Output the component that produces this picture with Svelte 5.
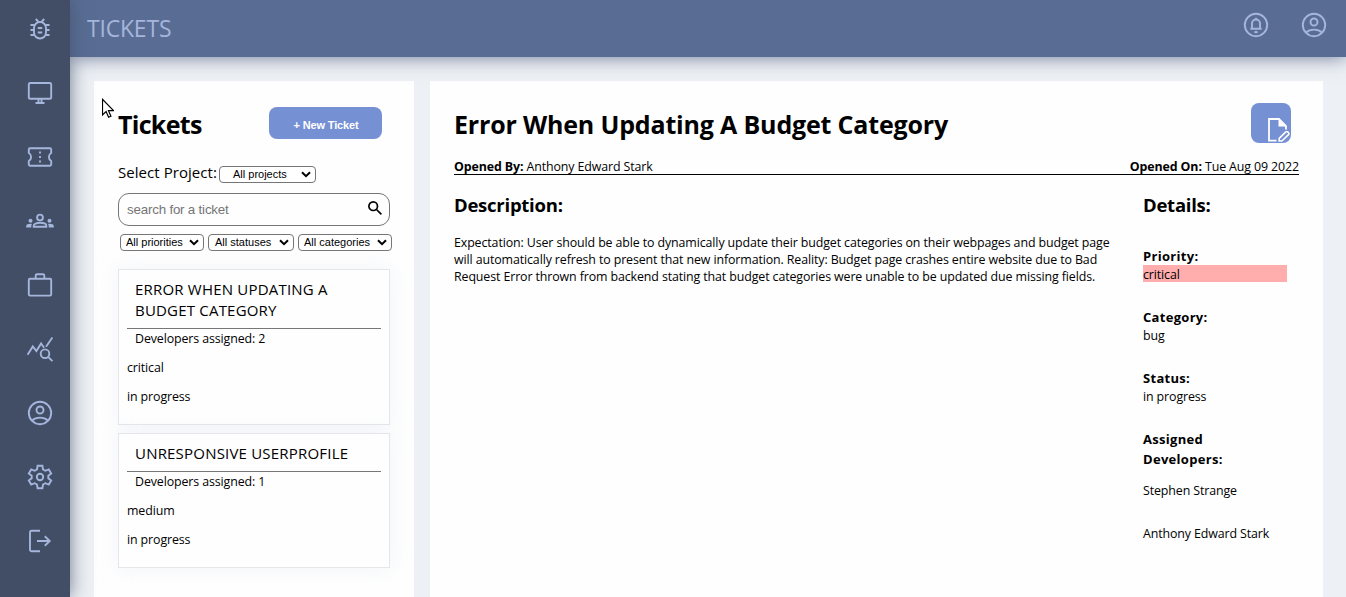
<script>
  const nav = ['bug', 'desktop', 'ticket', 'groups', 'work', 'stats', 'account', 'settings', 'logout'];
  const tickets = [
    { title: 'Error When Updating A Budget Category', devs: 2, priority: 'critical', status: 'in progress' },
    { title: 'Unresponsive Userprofile', devs: 1, priority: 'medium', status: 'in progress' }
  ];
  const filters = [
    { label: 'All priorities', cls: 'priorities' },
    { label: 'All statuses', cls: 'statuses' },
    { label: 'All categories', cls: 'categories' }
  ];
  const developers = ['Stephen Strange', 'Anthony Edward Stark'];
</script>

{#snippet icon(name)}
  <svg class="icon" viewBox="0 0 28 28" aria-hidden="true">
    {#if name === 'bug'}
      <rect x="8" y="7" width="12" height="16.5" rx="6" />
      <path d="M9.8 4l2.7 3M18.2 4l-2.7 3M4.5 10h4M4.5 15h3.5M4.5 20h4M23.5 10h-4M23.5 15h-3.5M23.5 20h-4M11.8 13h4.4M11.8 17.5h4.4" />
    {:else if name === 'desktop'}
      <rect x="2.8" y="4" width="22.4" height="15.8" rx="1.4" />
      <path d="M12.5 20v3.2M15.5 20v3.2M9.5 24h9" />
    {:else if name === 'ticket'}
      <path d="M4 5.2h20q1.2 0 1.2 1.2v3.6a4.6 4.6 0 0 0 0 8v3.6q0 1.2-1.2 1.2H4q-1.2 0-1.2-1.2V18a4.6 4.6 0 0 0 0-8V6.4q0-1.2 1.2-1.2z" />
      <path d="M14 8.5v2M14 13v2M14 17.5v2" />
    {:else if name === 'groups'}
      <g transform="translate(0 .8)">
        <circle cx="14" cy="9.7" r="2.9" />
        <path d="M7.7 19v-1.2c0-1.7 3-2.8 6.3-2.8s6.3 1.1 6.3 2.8V19z" />
        <g class="solid">
          <circle cx="4.5" cy="13" r="2" /><circle cx="23.5" cy="13" r="2" />
          <path d="M.2 19.8v-1.6c0-1.6 2.4-2.5 5.8-2.1q-.7.8-.7 2v1.7zM27.8 19.8v-1.6c0-1.6-2.4-2.5-5.8-2.1q.7.8.7 2v1.7z" />
        </g>
      </g>
    {:else if name === 'work'}
      <rect x="2.8" y="7.8" width="22.4" height="16.8" rx="1.2" />
      <path d="M9.7 7.8V4.4q0-1.2 1.2-1.2h6.2q1.2 0 1.2 1.2v3.4" />
    {:else if name === 'stats'}
      <path d="M1.6 19.8l5.2-8.3 3.6 4.5 4.7-7.5 3 4.2M20 11.8l6.4-9.3M22.6 22.3l3.9 3.9" />
      <circle cx="19" cy="18.7" r="4.3" />
    {:else if name === 'account'}
      <circle cx="14" cy="14" r="11.2" />
      <circle cx="14" cy="11" r="3.5" />
      <path d="M6 21.5c4-3.8 12-3.8 16 0" />
    {:else if name === 'settings'}
      <path d="M11.6 2.8h4.8l.6 3.7 2.3 1.3 3.5-1.4 2.4 4.1-2.9 2.3v2.4l2.9 2.3-2.4 4.1-3.5-1.4-2.3 1.3-.6 3.7h-4.8l-.6-3.7-2.3-1.3-3.5 1.4-2.4-4.1 2.9-2.3v-2.4l-2.9-2.3 2.4-4.1 3.5 1.4 2.3-1.3z" />
      <circle cx="14" cy="14" r="3.2" />
    {:else if name === 'logout'}
      <path d="M14 3.8H5.5q-1.5 0-1.5 1.5v17.4q0 1.5 1.5 1.5H14M11 14h12.5M18.8 9.3l4.9 4.7-4.9 4.7" />
    {:else if name === 'bell'}
      <circle cx="14" cy="14" r="11.2" />
      <path d="M8.3 17.7h11.4M10 17.5v-5a4 4 0 0 1 8 0v5M14 8.3V6.8M12.5 20.5q1.5 1.3 3 0" />
    {/if}
  </svg>
{/snippet}

{#snippet dropdown(label, cls)}
  <button class="select {cls}">
    <span>{label}</span>
    <svg viewBox="0 0 10 7" aria-hidden="true"><path d="M1 1.200l4 4 4-4" /></svg>
  </button>
{/snippet}

<div class="app">
  <nav class="sidebar">
    {#each nav as name}
      {@render icon(name)}
    {/each}
  </nav>
  <div class="page">
    <header class="topbar">
      <h1>TICKETS</h1>
      <div class="user">
        {@render icon('bell')}
        {@render icon('account')}
      </div>
    </header>
    <main>
      <section class="panel list">
        <div class="list-head">
          <h2>Tickets</h2>
          <button class="new">+ New Ticket</button>
        </div>
        <div class="project">
          <span class="label">Select Project:</span>
          {@render dropdown('All projects', 'projects')}
        </div>
        <div class="search">
          <input placeholder="search for a ticket" />
          <svg viewBox="0 0 16 16" aria-hidden="true"><circle cx="6.2" cy="6.2" r="4.3" /><path d="M9.5 9.5l4.900 4.900" /></svg>
        </div>
        <div class="filters">
          {#each filters as f}
            {@render dropdown(f.label, f.cls)}
          {/each}
        </div>
        {#each tickets as t}
          <article class="card">
            <h3>{t.title}</h3>
            <p class="devs">Developers assigned: {t.devs}</p>
            <p>{t.priority}</p>
            <p>{t.status}</p>
          </article>
        {/each}
      </section>

      <section class="panel detail">
        <div class="detail-head">
          <h2>Error When Updating A Budget Category</h2>
          <button class="edit" aria-label="Edit ticket">
            <svg viewBox="0 0 24 26" aria-hidden="true">
              <path d="M10.500 23.700H3V2h10l7 7v3.500" />
              <path class="solid" d="M12.500 1.500v8H20.500z" />
              <path class="pencil" d="M13.200 24v-2.600l6.600-6.500q.9-.8 1.800 0l.9.900q.8.900 0 1.800L15.900 24z" />
            </svg>
          </button>
        </div>
        <div class="opened">
          <span><b>Opened By:</b> Anthony Edward Stark</span>
          <span><b>Opened On:</b> Tue Aug 09 2022</span>
        </div>
        <div class="columns">
          <div class="description">
            <h3>Description:</h3>
            <p>
              Expectation: User should be able to dynamically update their budget categories on their webpages and budget page<br />
              will automatically refresh to present that new information. Reality: Budget page crashes entire website due to Bad<br />
              Request Error thrown from backend stating that budget categories were unable to be updated due missing fields.
            </p>
          </div>
          <aside>
            <h3>Details:</h3>
            <dl>
              <div><dt>Priority:</dt><dd class="critical">critical</dd></div>
              <div><dt>Category:</dt><dd>bug</dd></div>
              <div><dt>Status:</dt><dd>in progress</dd></div>
              <div><dt>Assigned<br />Developers:</dt>
                {#each developers as d}<dd class="dev">{d}</dd>{/each}
              </div>
            </dl>
          </aside>
        </div>
      </section>
    </main>
  </div>
  <svg class="cursor" viewBox="0 0 12 20" aria-hidden="true">
    <path d="M.5 1.300v15.700l3.600-3.500 2.500 5.700 2.300-1-2.400-5.500h5z" />
  </svg>
</div>

<style>
  :global(body) { margin: 0; overflow: hidden; }
  * { box-sizing: border-box; }
  h1, h2, h3, p, dl, dd { margin: 0; }
  button { border: 0; padding: 0; letter-spacing: 0; }
  .app {
    display: flex;
    height: 597px;
    position: relative;
    overflow: hidden;
    background: #edf1f5;
    color: #000;
    font: 12.400px/17px "Open Sans", sans-serif;
    letter-spacing: -.11px;
  }
  .sidebar {
    width: 70px;
    flex: none;
    display: flex;
    flex-direction: column;
    gap: 36px;
    padding: 15px 0 0 26px;
    background: #414e66;
    box-shadow: 0 0 18px rgba(65, 78, 102, .75);
    z-index: 2;
  }
  .icon {
    width: 28px;
    height: 28px;
    flex: none;
    fill: none;
    stroke: #a5b5db;
    stroke-width: 1.900;
  }
  .icon .solid { fill: #a5b5db; stroke: none; }
  .page { flex: 1; display: flex; flex-direction: column; }
  .topbar {
    height: 57px;
    flex: none;
    display: flex;
    justify-content: space-between;
    padding: 0 19px 0 17px;
    background: #596d94;
    box-shadow: 0 0 18px rgba(65, 78, 120, .75);
    z-index: 1;
  }
  .topbar h1 {
    font-size: 23px;
    font-weight: 400;
    line-height: 56px;
    letter-spacing: -.2px;
    color: #a5b5db;
  }
  .user { display: flex; gap: 30px; padding-top: 11px; margin-right: -1px; }
  main { flex: 1; display: flex; gap: 16px; padding: 24px 23px 0 24px; }
  .panel { background: #fefefe; }
  .list { width: 320px; flex: none; padding: 26px 24px 0; }
  .list-head { display: flex; justify-content: space-between; padding-right: 8px; height: 32px; }
  h2 { font-size: 25px; line-height: 35px; font-weight: 700; letter-spacing: -.7px; }
  .new {
    width: 113px;
    height: 32px;
    padding: 3px 0 0 1px;
    border-radius: 8px;
    background: #7690d4;
    color: #fff;
    font: bold 11px "Liberation Sans", sans-serif;
    letter-spacing: -.15px;
  }
  .project {
    display: flex;
    align-items: center;
    height: 18px;
    margin-top: 26px;
    font-size: 15px;
    letter-spacing: .05px;
  }
  .label { width: 101px; padding-bottom: 3px; white-space: nowrap; }
  .select {
    display: flex;
    align-items: center;
    justify-content: space-between;
    height: 17px;
    padding: 0 4px 0 5px;
    border: 1px solid #767676;
    border-radius: 4px;
    background: #fff;
    color: #000;
    font: 11px "Liberation Sans", sans-serif;
    white-space: nowrap;
  }
  .select svg { width: 10px; height: 7px; fill: none; stroke: #000; stroke-width: 2; }
  .projects { width: 97px; padding-left: 13px; }
  .priorities { width: 84px; }
  .statuses { width: 86px; padding-left: 6px; }
  .categories { width: 94px; }
  .search {
    display: flex;
    align-items: center;
    height: 33px;
    margin-top: 10px;
    padding: 0 6px 0 8px;
    border: 1px solid #767676;
    border-radius: 11px;
  }
  .search input {
    flex: 1;
    min-width: 0;
    border: 0;
    padding: 0;
    background: none;
    font: 13.330px "Liberation Sans", sans-serif;
    letter-spacing: -.19px;
  }
  .search input::placeholder { color: #757575; }
  .search svg { width: 16px; height: 16px; margin-top: -3px; fill: none; stroke: #000; stroke-width: 1.700; }
  .filters { display: flex; gap: 4px; margin: 8px -2px 18px 2px; }
  .filters .select { padding-bottom: 1px; }
  .card {
    margin-bottom: 8px;
    padding: 8px 8px 18px;
    border: 1px solid #e4e6ea;
    background: #fefefe;
    box-shadow: 0 0 20px rgba(200, 210, 230, .22);
  }
  .card h3 {
    padding: 1px 8px 7px;
    border-bottom: 1px solid #777;
    font-size: 15px;
    line-height: 21px;
    font-weight: 400;
    letter-spacing: .2px;
    text-transform: uppercase;
  }
  .card p { height: 18px; line-height: 18px; margin-top: 11px; }
  .card .devs { height: 19px; line-height: 19px; margin: 0; padding-left: 8px; }
  .detail { flex: 1; padding: 22px 24px 0; }
  .detail-head { display: flex; justify-content: space-between; height: 40px; padding-right: 8px; }
  .detail-head h2 { line-height: 43px; letter-spacing: -.17px; white-space: nowrap; }
  .edit {
    width: 40px;
    height: 40px;
    padding: 13px 0 0 15px;
    border-radius: 8px;
    background: #7690d4;
  }
  .edit svg { display: block; width: 24px; height: 26px; fill: none; stroke: #fff; stroke-width: 1.800; }
  .edit .solid { fill: #fff; stroke: none; }
  .edit .pencil { stroke-width: 1.600; }
  .opened {
    display: flex;
    justify-content: space-between;
    height: 17px;
    margin-top: 15px;
    border-bottom: 1px solid #000;
    white-space: nowrap;
  }
  .columns { display: flex; justify-content: space-between; }
  .columns h3 { margin-top: 17px; font-size: 18.500px; line-height: 26px; font-weight: 700; letter-spacing: -.25px; }
  .description p { margin-top: 16px; white-space: nowrap; }
  aside { width: 156px; padding-right: 12px; }
  dl { margin-top: 28px; }
  dl > div { margin-bottom: 24px; }
  dt { font-size: 13px; line-height: 20px; font-weight: 700; letter-spacing: .3px; }
  dd { height: 17px; line-height: 17px; }
  .critical { margin-top: -1px; margin-bottom: 25px; padding-top: 1px; background: #ffadad; }
  .dev { margin-top: 13px; margin-bottom: 26px; }
  .dev + .dev { margin-top: 0; }
  .cursor { position: absolute; left: 102px; top: 98px; width: 12px; height: 20px; fill: #fff; stroke: #000; stroke-width: 1.200; z-index: 3; }
</style>
